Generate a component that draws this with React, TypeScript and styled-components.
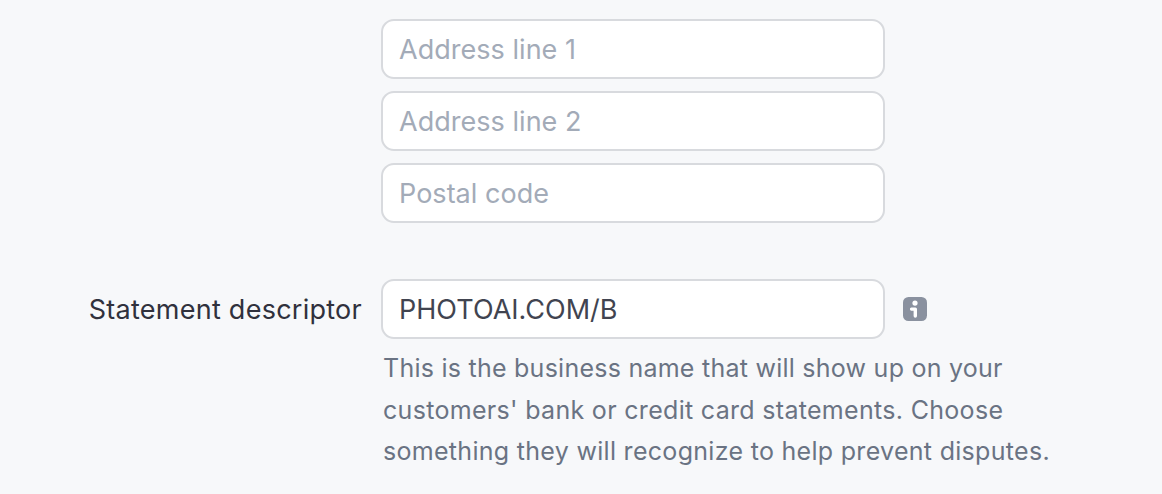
import React from 'react';
import styled, { createGlobalStyle } from 'styled-components';

const colors = {
  page: '#f7f8fa',
  field: '#ffffff',
  border: '#d8dade',
  placeholder: '#a3abb8',
  label: '#30313d',
  value: '#414450',
  hint: '#6a7383',
  icon: '#8a919f',
};

const GlobalStyle = createGlobalStyle`
  * {
    box-sizing: border-box;
  }

  body {
    margin: 0;
    background-color: ${colors.page};
    font-family: Inter, 'Liberation Sans', sans-serif;
  }
`;

const ADDRESS_FIELDS = ['Address line 1', 'Address line 2', 'Postal code'];

const App = () => {
  return (
    <>
      <GlobalStyle />
      <Form>
        <FieldStack>
          {ADDRESS_FIELDS.map((label) => (
            <Input key={label} placeholder={label} aria-label={label} />
          ))}
        </FieldStack>
        <Label htmlFor="descriptor">Statement descriptor</Label>
        <FieldRow>
          <Input id="descriptor" defaultValue="PHOTOAI.COM/B" />
          <InfoIcon />
        </FieldRow>
        <Hint>
          <HintLine spacing={0.25}>This is the business name that will show up on your</HintLine>
          <HintLine spacing={0.31}>customers' bank or credit card statements. Choose</HintLine>
          <HintLine spacing={0.3}>something they will recognize to help prevent disputes.</HintLine>
        </Hint>
      </Form>
    </>
  );
};

export default App;

const InfoIcon = () => (
  <svg width="24" height="24" viewBox="0 0 24 24" fill="none">
    <rect width="24" height="24" rx="5.5" fill={colors.icon} />
    <circle cx="12" cy="6.1" r="2.6" fill="#fff" />
    <path
      d="M8.4 10.5H12.4Q14 10.5 14 12.1V19.1Q14 20.7 12.3 20.7Q10.6 20.7 10.6 19.1V13.7H8.4Q6.9 13.7 6.9 12.1Q6.9 10.5 8.4 10.5Z"
      fill="#fff"
    />
  </svg>
);

const Form = styled.form`
  display: grid;
  grid-template-columns: 362px 780px;
  column-gap: 19px;
  width: 1162px;
  height: 494px;
  padding-top: 19px;
  align-content: start;
  overflow: hidden;
`;

const FieldStack = styled.div`
  grid-column: 2;
  display: flex;
  flex-direction: column;
  gap: 12px;
  margin-bottom: 56px;
`;

const Input = styled.input`
  width: 504px;
  height: 60px;
  padding: 0 16px;
  border: 2px solid ${colors.border};
  border-radius: 13px;
  outline: none;
  background-color: ${colors.field};
  color: ${colors.value};
  font-family: inherit;
  font-size: 27px;
  letter-spacing: 0.03px;

  &::placeholder {
    color: ${colors.placeholder};
    opacity: 1;
  }
`;

const Label = styled.label`
  align-self: center;
  justify-self: end;
  color: ${colors.label};
  font-size: 27px;
  letter-spacing: 0.26px;
  white-space: nowrap;
`;

const FieldRow = styled.div`
  display: flex;
  align-items: center;
  gap: 18px;
`;

const Hint = styled.div`
  grid-column: 2;
  margin: 9px 0 0 2px;
  color: ${colors.hint};
  font-size: 25px;
  line-height: 41.5px;
`;

const HintLine = styled.div<{ spacing: number }>`
  letter-spacing: ${({ spacing }) => spacing}px;
  white-space: nowrap;
`;
